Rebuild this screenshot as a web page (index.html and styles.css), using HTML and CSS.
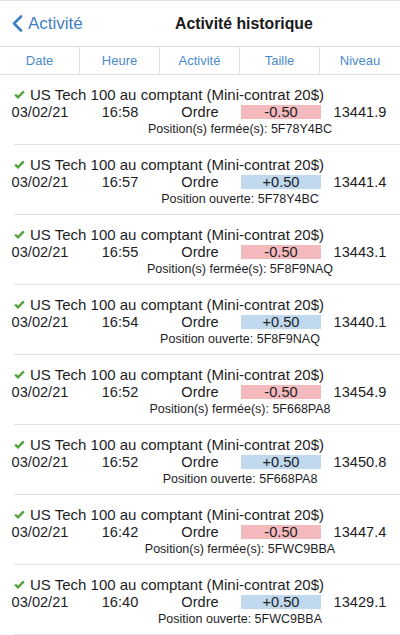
FILE: index.html
```html
<!DOCTYPE html>
<html lang="fr">
<head>
<meta charset="utf-8">
<title>Activité historique</title>
<link rel="stylesheet" href="styles.css">
</head>
<body>
<div class="topbar">
  <a class="back" href="#">
    <svg class="chev" width="11" height="17" viewBox="0 0 11 17"><polyline points="9,1.5 2,8.5 9,15.5" fill="none" stroke="#3f7fc4" stroke-width="2.6" stroke-linecap="round" stroke-linejoin="round"/></svg>
    <span>Activité</span>
  </a>
  <h1 class="title">Activité historique</h1>
</div>
<div class="cols">
  <div class="col">Date</div>
  <div class="col">Heure</div>
  <div class="col">Activité</div>
  <div class="col">Taille</div>
  <div class="col">Niveau</div>
</div>
<div class="list">
  <div class="row">
    <div class="name"><svg class="check" width="11" height="9" viewBox="0 0 11 9"><polyline points="1.2,4.6 4,7.3 9.8,1.3" fill="none" stroke="#4fa13a" stroke-width="2.4"/></svg>US Tech 100 au comptant (Mini-contrat 20$)</div>
    <div class="data"><span>03/02/21</span><span>16:58</span><span>Ordre</span><span class="pill sell">-0.50</span><span>13441.9</span></div>
    <div class="sub">Position(s) fermée(s): 5F78Y4BC</div>
  </div>
  <div class="row">
    <div class="name"><svg class="check" width="11" height="9" viewBox="0 0 11 9"><polyline points="1.2,4.6 4,7.3 9.8,1.3" fill="none" stroke="#4fa13a" stroke-width="2.4"/></svg>US Tech 100 au comptant (Mini-contrat 20$)</div>
    <div class="data"><span>03/02/21</span><span>16:57</span><span>Ordre</span><span class="pill buy">+0.50</span><span>13441.4</span></div>
    <div class="sub">Position ouverte: 5F78Y4BC</div>
  </div>
  <div class="row">
    <div class="name"><svg class="check" width="11" height="9" viewBox="0 0 11 9"><polyline points="1.2,4.6 4,7.3 9.8,1.3" fill="none" stroke="#4fa13a" stroke-width="2.4"/></svg>US Tech 100 au comptant (Mini-contrat 20$)</div>
    <div class="data"><span>03/02/21</span><span>16:55</span><span>Ordre</span><span class="pill sell">-0.50</span><span>13443.1</span></div>
    <div class="sub">Position(s) fermée(s): 5F8F9NAQ</div>
  </div>
  <div class="row">
    <div class="name"><svg class="check" width="11" height="9" viewBox="0 0 11 9"><polyline points="1.2,4.6 4,7.3 9.8,1.3" fill="none" stroke="#4fa13a" stroke-width="2.4"/></svg>US Tech 100 au comptant (Mini-contrat 20$)</div>
    <div class="data"><span>03/02/21</span><span>16:54</span><span>Ordre</span><span class="pill buy">+0.50</span><span>13440.1</span></div>
    <div class="sub">Position ouverte: 5F8F9NAQ</div>
  </div>
  <div class="row">
    <div class="name"><svg class="check" width="11" height="9" viewBox="0 0 11 9"><polyline points="1.2,4.6 4,7.3 9.8,1.3" fill="none" stroke="#4fa13a" stroke-width="2.4"/></svg>US Tech 100 au comptant (Mini-contrat 20$)</div>
    <div class="data"><span>03/02/21</span><span>16:52</span><span>Ordre</span><span class="pill sell">-0.50</span><span>13454.9</span></div>
    <div class="sub">Position(s) fermée(s): 5F668PA8</div>
  </div>
  <div class="row">
    <div class="name"><svg class="check" width="11" height="9" viewBox="0 0 11 9"><polyline points="1.2,4.6 4,7.3 9.8,1.3" fill="none" stroke="#4fa13a" stroke-width="2.4"/></svg>US Tech 100 au comptant (Mini-contrat 20$)</div>
    <div class="data"><span>03/02/21</span><span>16:52</span><span>Ordre</span><span class="pill buy">+0.50</span><span>13450.8</span></div>
    <div class="sub">Position ouverte: 5F668PA8</div>
  </div>
  <div class="row">
    <div class="name"><svg class="check" width="11" height="9" viewBox="0 0 11 9"><polyline points="1.2,4.6 4,7.3 9.8,1.3" fill="none" stroke="#4fa13a" stroke-width="2.4"/></svg>US Tech 100 au comptant (Mini-contrat 20$)</div>
    <div class="data"><span>03/02/21</span><span>16:42</span><span>Ordre</span><span class="pill sell">-0.50</span><span>13447.4</span></div>
    <div class="sub">Position(s) fermée(s): 5FWC9BBA</div>
  </div>
  <div class="row">
    <div class="name"><svg class="check" width="11" height="9" viewBox="0 0 11 9"><polyline points="1.2,4.6 4,7.3 9.8,1.3" fill="none" stroke="#4fa13a" stroke-width="2.4"/></svg>US Tech 100 au comptant (Mini-contrat 20$)</div>
    <div class="data"><span>03/02/21</span><span>16:40</span><span>Ordre</span><span class="pill buy">+0.50</span><span>13429.1</span></div>
    <div class="sub">Position ouverte: 5FWC9BBA</div>
  </div>
</div>
</body>
</html>
```
FILE: styles.css
```css
* { box-sizing: border-box; }
html, body { margin: 0; padding: 0; background: #fff; }
body {
  width: 400px;
  font-family: "Liberation Sans", Arial, sans-serif;
  color: #1d1d1f;
  overflow: hidden;
}
.topbar {
  display: flex;
  align-items: center;
  height: 47px;
  border-top: 1px solid #e2e2e2;
  border-bottom: 1px solid #dcdcdc;
}
.back {
  display: flex;
  align-items: center;
  gap: 5px;
  width: 175px;
  padding-left: 12px;
  color: #3f7fc4;
  text-decoration: none;
  font-size: 17px;
}
.chev { display: block; }
.title {
  margin: 0;
  padding-top: 1px;
  font-size: 15.8px;
  font-weight: bold;
  color: #1a1a1a;
}
.cols {
  display: grid;
  grid-template-columns: repeat(5, 80px);
  height: 28px;
  border-bottom: 1px solid #dcdcdc;
}
.col {
  display: flex;
  align-items: center;
  justify-content: center;
  font-size: 13px;
  color: #4a8bcd;
  border-right: 1px solid #e0e0e0;
}
.col:last-child { border-right: none; }
.row { padding-top: 10px; }
.row::after {
  content: "";
  display: block;
  margin-top: 7px;
  margin-left: 14px;
  border-bottom: 1px solid #e2e2e2;
}
.name {
  display: flex;
  align-items: center;
  height: 18px;
  padding-left: 14px;
  gap: 5px;
  font-size: 15px;
}
.check { display: block; flex: none; }
.data {
  display: grid;
  grid-template-columns: repeat(5, 80px);
  align-items: center;
  height: 18px;
  font-size: 14.6px;
  text-align: center;
}
.pill {
  display: block;
  height: 14px;
  line-height: 14px;
  margin-left: 1px;
  width: 80px;
}
.sell { background: #f4b9bc; }
.buy { background: #c1d9ef; }
.sub {
  height: 16px;
  line-height: 16px;
  padding-left: 80px;
  text-align: center;
  font-size: 12.5px;
}
```
